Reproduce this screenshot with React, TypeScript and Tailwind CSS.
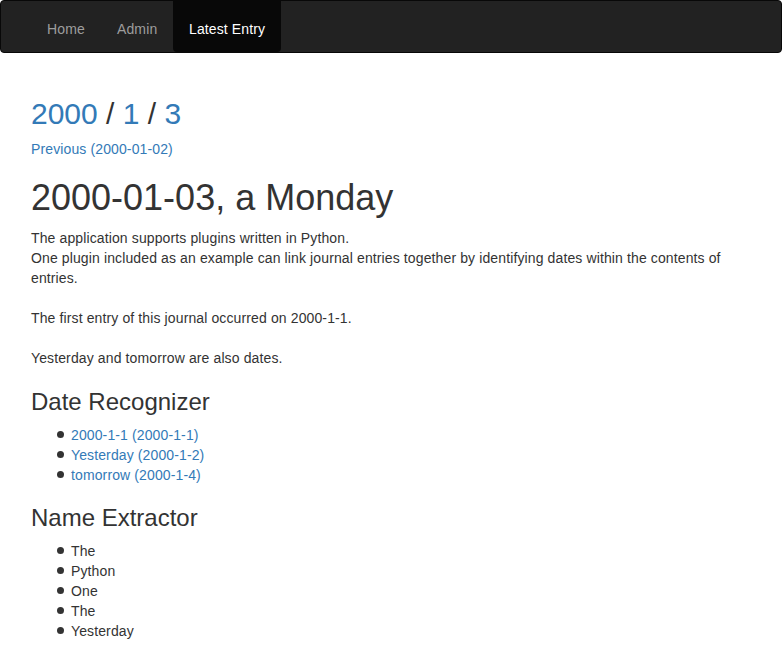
import React from 'react';

const navItems = [
    { label: 'Home', active: false, width: 'w-[70px]' },
    { label: 'Admin', active: false, width: 'w-[71px]' },
    { label: 'Latest Entry', active: true, width: 'w-[108px]' },
];

const recognized = ['2000-1-1 (2000-1-1)', 'Yesterday (2000-1-2)', 'tomorrow (2000-1-4)'];
const names = ['The', 'Python', 'One', 'The', 'Yesterday'];

const Bullet: React.FC<{ children: React.ReactNode }> = ({ children }) => (
    <li className="relative">
        <span className="absolute left-[-14px] top-[6px] w-[7px] h-[7px] rounded-full bg-[#333]" />
        {children}
    </li>
);

const App: React.FC = () => {
    return (
        <div className="min-h-screen bg-white text-[14px] leading-[20px] tracking-[0.12px] text-[#333] font-['Liberation_Sans',Arial,sans-serif]">
            <nav className="h-[53px] bg-[#222] border border-[#080808] rounded-[4px] mb-[20px]">
                <div className="w-[750px] mx-auto px-[15px]">
                    <ul className="flex ml-[1px]">
                        {navItems.map((item) => (
                            <li key={item.label}>
                                <a
                                    href="#"
                                    className={
                                        item.active
                                            ? `block ${item.width} h-[51px] pl-[16px] pt-[18px] bg-[#080808] text-white rounded-b-[4px]`
                                            : `block ${item.width} h-[51px] pl-[15px] pt-[18px] text-[#9d9d9d]`
                                    }
                                >
                                    {item.label}
                                </a>
                            </li>
                        ))}
                    </ul>
                </div>
            </nav>

            <div className="flow-root w-[750px] mx-auto px-[15px]">
                <h2 className="text-[30px] leading-[33px] tracking-normal mt-[24px] mb-[9px]">
                    <a href="#" className="text-[#337ab7]">2000</a> / <a href="#" className="text-[#337ab7]">1</a> /{' '}
                    <a href="#" className="text-[#337ab7]">3</a>
                </h2>
                <p className="mb-[19px]">
                    <a href="#" className="text-[#337ab7]">Previous (2000-01-02)</a>
                </p>

                <h1 className="text-[36px] leading-[1.1] tracking-normal mb-[10px]">2000-01-03, a Monday</h1>
                <p className="mb-[10px]">
                    The application supports plugins written in Python.
                    <br />
                    One plugin included as an example can link journal entries together by identifying dates within the contents of entries.
                    <br />
                    <br />
                    The first entry of this journal occurred on 2000-1-1.
                    <br />
                    <br />
                    Yesterday and tomorrow are also dates.
                </p>

                <h3 className="text-[24px] leading-[1.1] tracking-normal mt-[21px] mb-[10px]">Date Recognizer</h3>
                <ul className="pl-10 mb-[10px]">
                    {recognized.map((r) => (
                        <Bullet key={r}>
                            <a href="#" className="text-[#337ab7]">{r}</a>
                        </Bullet>
                    ))}
                </ul>

                <h3 className="text-[24px] leading-[1.1] tracking-normal mt-[20px] mb-[10px]">Name Extractor</h3>
                <ul className="pl-10 mb-[10px]">
                    {names.map((n, i) => (
                        <Bullet key={i}>{n}</Bullet>
                    ))}
                </ul>
            </div>
        </div>
    );
};

export default App;
